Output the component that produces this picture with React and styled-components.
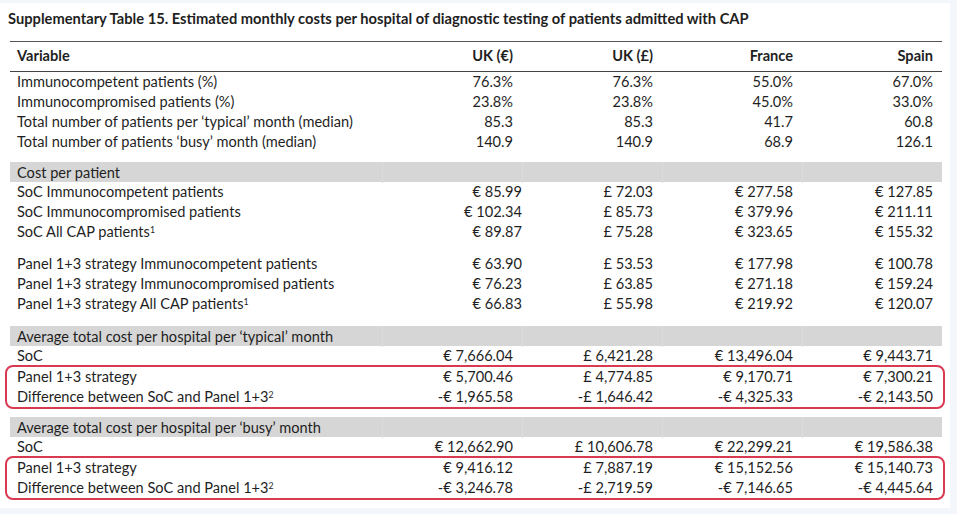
import styled, { createGlobalStyle } from "styled-components"

const GlobalStyle = createGlobalStyle`
  html, body {
    margin: 0;
    padding: 0;
    background: #f3f6fa;
  }
  body {
    font-family: Lato, "Liberation Sans", sans-serif;
    color: #1f1f1f;
  }
`

const Sheet = styled.div`
  margin-top: 3px;
  width: 950px;
  height: 505px;
  background: #fff;
  padding: 5px 0 0 10px;
  box-sizing: border-box;
`

const Title = styled.h1`
  margin: 0 0 13px -2px;
  font-size: 14.7px;
  line-height: 20px;
  font-weight: 700;
  white-space: nowrap;
`

const Table = styled.div`
  width: 932px;
  font-size: 14.6px;
`

const Row = styled.div`
  display: grid;
  grid-template-columns: 372px repeat(4, 140px);
  height: ${p => p.h || 20}px;
  line-height: ${p => p.h || 20}px;
  white-space: nowrap;
`

const HeaderRow = styled(Row)`
  font-weight: 700;
  border-top: 1.5px solid #555;
  border-bottom: 1px solid #444;
`

const Cell = styled.div`
  padding: 0 ${p => (p.$label ? 0 : p.$pad ?? 9)}px 0 ${p => (p.$label ? 7 : 0)}px;
  text-align: ${p => (p.$label ? "left" : "right")};
`

const Band = styled.div`
  display: grid;
  grid-template-columns: 372px repeat(4, 140px);
  height: 20px;
  line-height: 21px;
  margin-top: ${p => p.$gap}px;
  background: #d6d6d6;

  & > div + div {
    border-left: 1px solid #dcdcdc;
  }
`

const Spacer = styled.div`
  height: ${p => p.h}px;
`

const Highlight = styled.div`
  margin: ${p => p.$top || 0}px -3px 0 -5px;
  padding: 0 1px 0 3px;
  border: 2px solid #d93a52;
  border-radius: 8px;
`

const Sup = styled.sup`
  font-size: 0.6em;
  line-height: 0;
  vertical-align: 0.5em;
`

const DataRow = ({ label, values, pad, h }) => (
  <Row h={h}>
    <Cell $label>{label}</Cell>
    {values.map((v, i) => (
      <Cell key={i} $pad={i === 0 ? pad : undefined}>
        {v}
      </Cell>
    ))}
  </Row>
)

const diff = (
  <>
    Difference between SoC and Panel 1+3<Sup>2</Sup>
  </>
)

export default function App() {
  return (
    <>
      <GlobalStyle />
      <Sheet>
        <Title>
          Supplementary Table 15. Estimated monthly costs per hospital of
          diagnostic testing of patients admitted with CAP
        </Title>
        <Table>
          <HeaderRow h={28.5}>
            <Cell $label>Variable</Cell>
            <Cell>UK (€)</Cell>
            <Cell>UK (£)</Cell>
            <Cell>France</Cell>
            <Cell>Spain</Cell>
          </HeaderRow>
          <DataRow label="Immunocompetent patients (%)" values={["76.3%", "76.3%", "55.0%", "67.0%"]} h={20.3} />
          <DataRow label="Immunocompromised patients (%)" values={["23.8%", "23.8%", "45.0%", "33.0%"]} h={20.3} />
          <DataRow label="Total number of patients per ‘typical’ month (median)" values={["85.3", "85.3", "41.7", "60.8"]} h={20.3} />
          <DataRow label="Total number of patients ‘busy’ month (median)" values={["140.9", "140.9", "68.9", "126.1"]} h={20.3} />

          <Band $gap={9}>
            <Cell $label>Cost per patient</Cell>
            <div />
            <div />
            <div />
            <div />
          </Band>
          <DataRow pad={0} label="SoC Immunocompetent patients" values={["€ 85.99", "£ 72.03", "€ 277.58", "€ 127.85"]} />
          <DataRow pad={0} label="SoC Immunocompromised patients" values={["€ 102.34", "£ 85.73", "€ 379.96", "€ 211.11"]} />
          <DataRow pad={0} label={<>SoC All CAP patients<Sup>1</Sup></>} values={["€ 89.87", "£ 75.28", "€ 323.65", "€ 155.32"]} />
          <Spacer h={12} />
          <DataRow pad={0} label="Panel 1+3 strategy Immunocompetent patients" values={["€ 63.90", "£ 53.53", "€ 177.98", "€ 100.78"]} />
          <DataRow pad={0} label="Panel 1+3 strategy Immunocompromised patients" values={["€ 76.23", "£ 63.85", "€ 271.18", "€ 159.24"]} />
          <DataRow pad={0} label={<>Panel 1+3 strategy All CAP patients<Sup>1</Sup></>} values={["€ 66.83", "£ 55.98", "€ 219.92", "€ 120.07"]} />

          <Band $gap={12}>
            <Cell $label>Average total cost per hospital per ‘typical’ month</Cell>
            <div />
            <div />
            <div />
            <div />
          </Band>
          <DataRow label="SoC" values={["€ 7,666.04", "£ 6,421.28", "€ 13,496.04", "€ 9,443.71"]} />
          <Highlight $top={-1}>
            <DataRow label="Panel 1+3 strategy" values={["€ 5,700.46", "£ 4,774.85", "€ 9,170.71", "€ 7,300.21"]} />
            <DataRow label={diff} values={["-€ 1,965.58", "-£ 1,646.42", "-€ 4,325.33", "-€ 2,143.50"]} />
          </Highlight>

          <Band $gap={8}>
            <Cell $label>Average total cost per hospital per ‘busy’ month</Cell>
            <div />
            <div />
            <div />
            <div />
          </Band>
          <DataRow label="SoC" values={["€ 12,662.90", "£ 10,606.78", "€ 22,299.21", "€ 19,586.38"]} />
          <Highlight $top={-1}>
            <DataRow label="Panel 1+3 strategy" values={["€ 9,416.12", "£ 7,887.19", "€ 15,152.56", "€ 15,140.73"]} />
            <DataRow label={diff} values={["-€ 3,246.78", "-£ 2,719.59", "-€ 7,146.65", "-€ 4,445.64"]} />
          </Highlight>
        </Table>
      </Sheet>
    </>
  )
}
